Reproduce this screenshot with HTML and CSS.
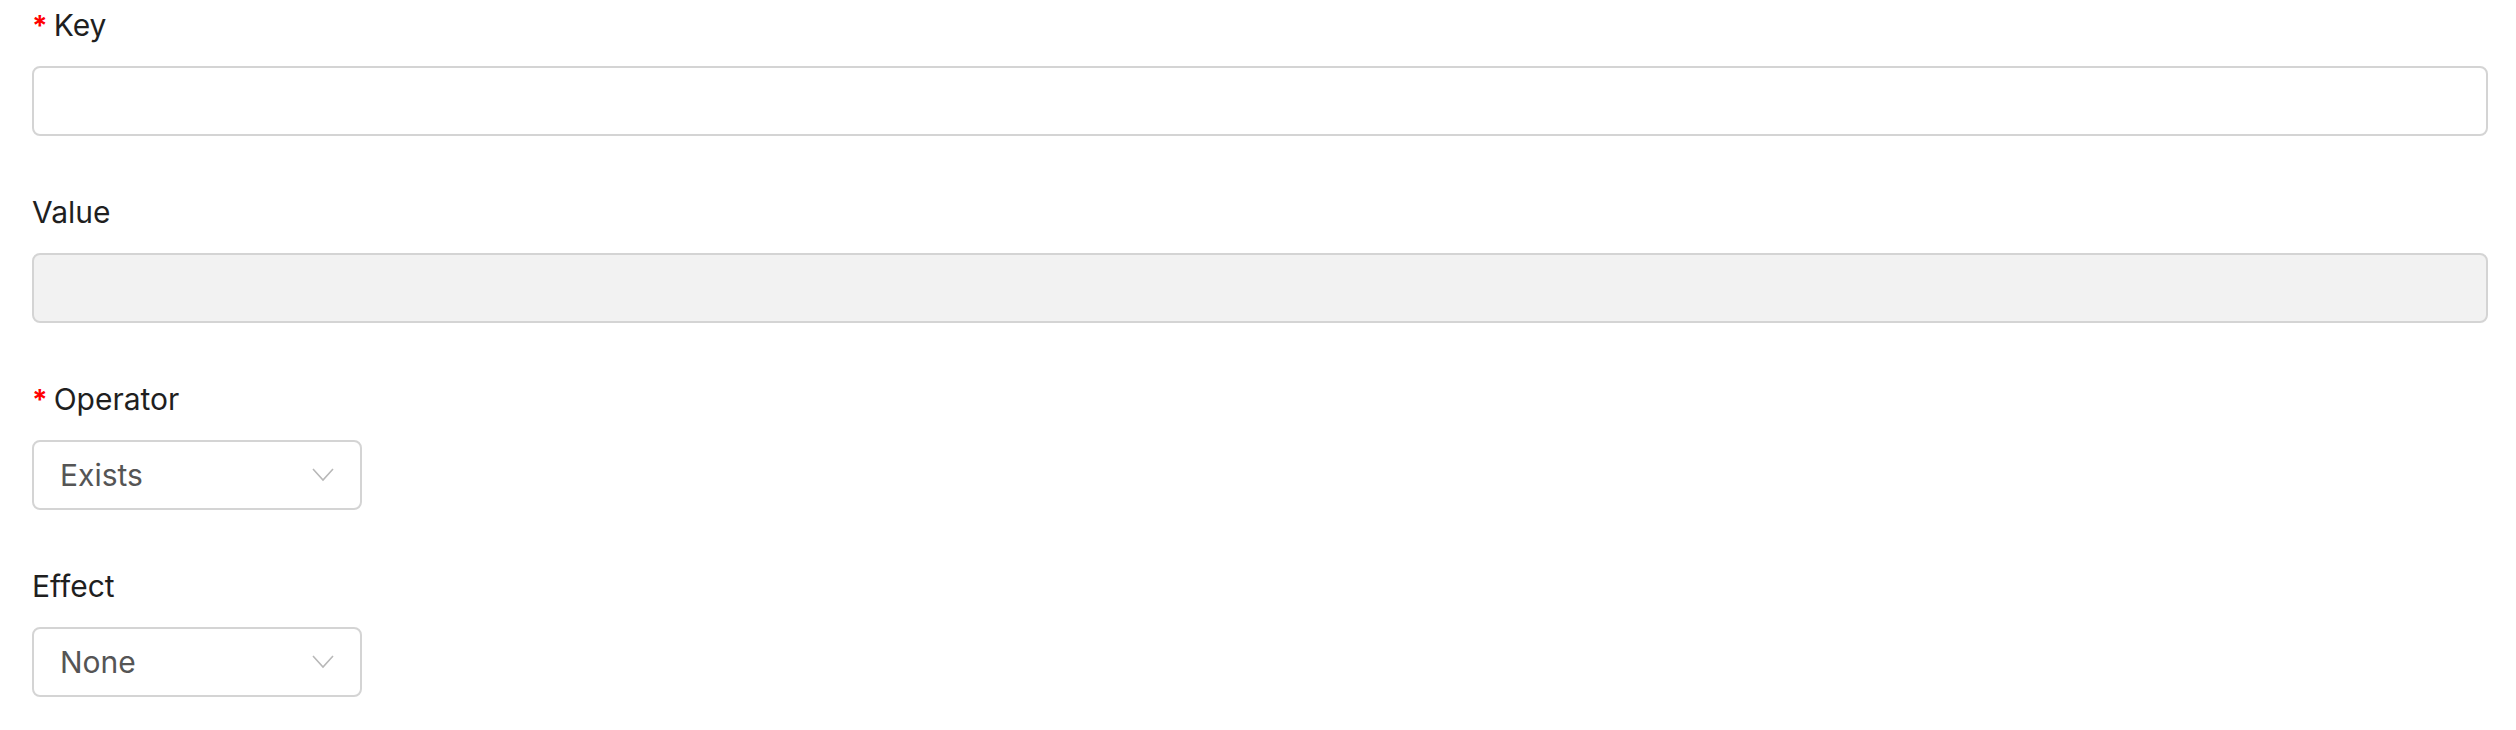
FILE: index.html
```html
<!DOCTYPE html>
<html lang="en">
<head>
<meta charset="utf-8">
<title>Toleration</title>
<link rel="stylesheet" href="styles.css">
</head>
<body>
<form class="form">
  <div class="field">
    <label class="label"><span class="req">*</span>Key</label>
    <input class="input" type="text">
  </div>
  <div class="field">
    <label class="label">Value</label>
    <input class="input input-disabled" type="text" disabled>
  </div>
  <div class="field">
    <label class="label"><span class="req">*</span>Operator</label>
    <div class="select">
      <span class="select-value">Exists</span>
      <svg class="chevron" viewBox="0 0 22 14" width="22" height="14"><path d="M1 1 L11 12 L21 1" fill="none" stroke="#b8b8b8" stroke-width="1.6"/></svg>
    </div>
  </div>
  <div class="field">
    <label class="label">Effect</label>
    <div class="select">
      <span class="select-value">None</span>
      <svg class="chevron" viewBox="0 0 22 14" width="22" height="14"><path d="M1 1 L11 12 L21 1" fill="none" stroke="#b8b8b8" stroke-width="1.6"/></svg>
    </div>
  </div>
</form>
</body>
</html>
```

FILE: styles.css
```css
html, body {
  margin: 0;
  padding: 0;
  background: #ffffff;
}
body {
  font-family: Inter, "Noto Sans", "Liberation Sans", sans-serif;
  color: #1f1f1f;
}
.form {
  display: flex;
  flex-direction: column;
  gap: 54px;
  padding: 3px 28px 0 32px;
}
.field {
  display: flex;
  flex-direction: column;
  gap: 19px;
}
.label {
  display: block;
  font-size: 30px;
  line-height: 44px;
  height: 44px;
  color: #1f1f1f;
}
.req {
  color: #ff0000;
  margin-right: 6px;
  font-size: 28px;
  font-weight: 700;
}
.input {
  box-sizing: border-box;
  display: block;
  width: 100%;
  height: 70px;
  margin: 0;
  border: 2px solid #d4d4d4;
  border-radius: 8px;
  background: #ffffff;
  font: inherit;
  font-size: 30px;
  padding: 0 26px;
  outline: none;
}
.input-disabled {
  background: #f2f2f2;
}
.select {
  box-sizing: border-box;
  width: 330px;
  height: 70px;
  border: 2px solid #d4d4d4;
  border-radius: 8px;
  background: #ffffff;
  display: flex;
  align-items: center;
  justify-content: space-between;
  padding: 0 26px 0 26px;
}
.select-value {
  font-size: 30px;
  color: #555555;
}
.chevron {
  display: block;
}
```
